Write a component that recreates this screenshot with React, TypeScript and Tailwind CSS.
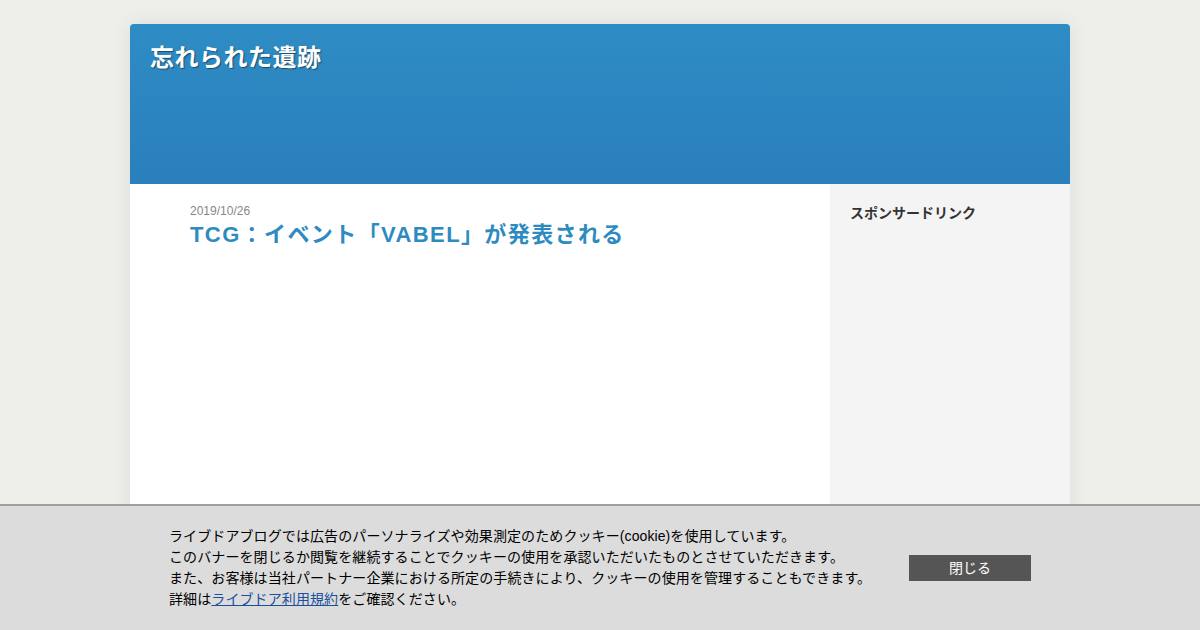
export default function App() {
	return (
		<div className="relative w-[1200px] h-[630px] overflow-hidden bg-[#eeeeea] font-['Liberation_Sans','Noto_Sans_CJK_JP',sans-serif]">
			{/* blog frame */}
			<div className="mx-auto mt-6 w-[940px] rounded-t shadow-[0_0_20px_rgba(0,0,0,0.08)]">
				<header className="h-[160px] rounded-t bg-gradient-to-b from-[#2e8cc4] to-[#2a7fbd] px-5 pt-[18px]">
					<h1 className="text-[24px] leading-[32px] font-bold tracking-[0.5px] text-white [text-shadow:1px_1px_1px_rgba(0,0,0,0.45)]">
						忘れられた遺跡
					</h1>
				</header>
				<div className="flex h-[460px]">
					<main className="w-[700px] bg-white pl-[60px] pt-[20px]">
						<div className="text-[12px] leading-[14px] text-[#888]">2019/10/26</div>
						<h2 className="mt-[4px] text-[22px] leading-[26px] font-bold tracking-[1.4px] text-[#2e8bc0]">
							TCG：イベント「VABEL」が発表される
						</h2>
					</main>
					<aside className="w-[240px] bg-[#f4f4f4] px-5 pt-[20px]">
						<h3 className="text-[14px] leading-[18px] font-bold text-[#333]">スポンサードリンク</h3>
					</aside>
				</div>
			</div>

			{/* cookie banner */}
			<div className="absolute bottom-0 left-0 w-full h-[126px] border-t-2 border-[#a0a0a0] bg-[#dcdcdc]">
				<div className="flex items-center pl-[169px] pt-[20px]">
					<p className="w-[740px] text-[14px] leading-[21px] tracking-[0.1px] text-black">
						ライブドアブログでは広告のパーソナライズや効果測定のためクッキー(cookie)を使用しています。
						<br />
						このバナーを閉じるか閲覧を継続することでクッキーの使用を承認いただいたものとさせていただきます。
						<br />
						また、お客様は当社パートナー企業における所定の手続きにより、クッキーの使用を管理することもできます。
						<br />
						詳細は<a href="#" className="text-[#1a4f9c] underline">ライブドア利用規約</a>をご確認ください。
					</p>
					<button className="w-[122px] h-[26px] bg-[#555] text-[14px] text-white">閉じる</button>
				</div>
			</div>
		</div>
	);
}
